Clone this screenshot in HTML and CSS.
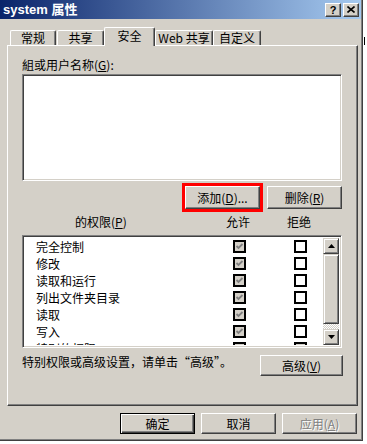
FILE: index.html
```html
<!DOCTYPE html>
<html lang="zh-CN">
<head>
  <meta charset="UTF-8">
  <title>system 属性</title>
  <link rel="stylesheet" href="styles.css">
</head>
<body>

<div class="screen">
<div class="dialog">

  <!-- barra del titolo -->
  <div class="titlebar">
    <span class="title">system 属性</span>
    <div class="caption-buttons">
      <span class="cap-btn">?</span>
      <span class="cap-btn">
        <svg width="8" height="7" viewBox="0 0 8 7"><path d="M0.5 0.5 L7.5 6.5 M7.5 0.5 L0.5 6.5" stroke="#000" stroke-width="1.6" fill="none"/></svg>
      </span>
    </div>
  </div>

  <div class="tabs">
    <div class="tab tab-general">常规</div>
    <div class="tab tab-share">共享</div>
    <div class="tab tab-security selected">安全</div>
    <div class="tab tab-web">Web 共享</div>
    <div class="tab tab-custom">自定义</div>
  </div>

  <div class="panel">
    <div class="label">組或用户名称(<u>G</u>):</div>
    <div class="field user-list"></div>

    <div class="button-row">
      <button class="btn btn-add">添加(<u>D</u>)...</button>
      <button class="btn">删除(<u>R</u>)</button>
    </div>

    <div class="perm-header">
      <span class="perm-title">的权限(<u>P</u>)</span>
      <span class="perm-col">允许</span>
      <span class="perm-col">拒绝</span>
    </div>

    <div class="field perm-list">
      <div class="perm-rows">
        <div class="perm-row"><span>完全控制</span><span class="check checked"></span><span class="check"></span></div>
        <div class="perm-row"><span>修改</span><span class="check checked"></span><span class="check"></span></div>
        <div class="perm-row"><span>读取和运行</span><span class="check checked"></span><span class="check"></span></div>
        <div class="perm-row"><span>列出文件夹目录</span><span class="check checked"></span><span class="check"></span></div>
        <div class="perm-row"><span>读取</span><span class="check checked"></span><span class="check"></span></div>
        <div class="perm-row"><span>写入</span><span class="check checked"></span><span class="check"></span></div>
        <div class="perm-row"><span>特别的权限</span><span class="check checked"></span><span class="check checked"></span></div>
      </div>
      <div class="scrollbar">
        <span class="sb-btn">
          <svg width="7" height="4" viewBox="0 0 7 4"><path d="M3.5 0 L7 4 L0 4 Z" fill="#000"/></svg>
        </span>
        <span class="sb-thumb"></span>
        <span class="sb-track"></span>
        <span class="sb-btn">
          <svg width="7" height="4" viewBox="0 0 7 4"><path d="M0 0 L7 0 L3.5 4 Z" fill="#000"/></svg>
        </span>
      </div>
    </div>

    <div class="advanced-row">
      <span class="note">特别权限或高级设置，请单击“高级”。</span>
      <button class="btn btn-advanced">高级(<u>V</u>)</button>
    </div>
  </div>

  <div class="footer">
    <button class="btn btn-default">确定</button>
    <button class="btn">取消</button>
    <button class="btn" disabled>应用(<u>A</u>)</button>
  </div>

</div>
<div class="edge"><span class="edge-mark"></span></div>
</div>

</body>
</html>
```

FILE: styles.css
```css
body {
  margin: 0;
  background: #fff;
  font-family: "Noto Sans CJK SC", "Liberation Sans", sans-serif;  /*font*/
  font-size: 12px;
  color: #000;
}
.screen {
  display: flex;
  width: 367px;
  height: 444px;
  overflow: hidden;
}
.dialog {
  width: 362px;
  height: 440px;
  background: #d4d0c8;            /*colore di Windows classico*/
  border-right: 1px solid #404040;
  border-bottom: 1px solid #404040;
  box-shadow: inset -1px -1px #808080;
  flex-shrink: 0;
}
.edge {
  flex: 1;
  padding-top: 37px;
  padding-left: 1px;
}
.edge-mark {
  display: block;
  width: 1px;
  height: 8px;
  background: #000;
}

/* barra del titolo */
.titlebar {
  height: 19px;
  margin-right: 1px;
  background: linear-gradient(to right, #0a246a, #a6caf0);
  display: flex;
  align-items: center;
  justify-content: space-between;
}
.title {
  font-family: "Liberation Sans", "Noto Sans CJK SC", sans-serif;
  font-weight: bold;
  font-size: 13px;
  color: #fff;
  padding-left: 3px;
  line-height: 15px;
}
.caption-buttons {
  display: flex;
  gap: 2px;
  padding-right: 2px;
}
.cap-btn {
  width: 14px;
  height: 12px;
  background: #d4d0c8;
  border: 1px solid;
  border-color: #fff #404040 #404040 #fff;
  box-shadow: inset -1px -1px #808080;
  display: flex;
  align-items: center;
  justify-content: center;
  font-family: "Liberation Sans", sans-serif;
  font-weight: bold;
  font-size: 11px;
  line-height: 12px;
}

/* schede */
.tabs {
  height: 26px;
  display: flex;
  align-items: flex-end;
  padding-left: 10px;
}
.tab {
  height: 14px;
  line-height: 14px;
  text-align: center;
  border-top: 1px solid #fff;
  border-left: 1px solid #fff;
  border-right: 1px solid #404040;
  box-shadow: inset -1px 0 #808080;
  border-radius: 2px 2px 0 0;
}
.tab-general { width: 44px; margin-right: 1px; }
.tab-share { width: 45px; }
.tab-security { width: 49px; }
.tab-web { width: 56px; }
.tab-custom { width: 46px; }
.tab.selected {
  height: 18px;
  line-height: 16px;
  margin-bottom: -1px;
  position: relative;
  z-index: 1;
  background: #d4d0c8;
}

/* pannello */
.panel {
  margin-left: 7px;
  width: 351px;
  height: 361px;
  border: 1px solid;
  border-color: #fff #404040 #404040 #fff;
  box-shadow: inset -1px -1px #808080;
  padding: 13px 0 0 14px;
  box-sizing: border-box;
}
.label {
  line-height: 12px;
  margin-bottom: 3px;
}
.field {
  background: #fff;
  border: 1px solid;
  border-color: #808080 #fff #fff #808080;
  box-shadow: inset 1px 1px #404040, inset -1px -1px #d4d0c8;
  box-sizing: border-box;
  width: 320px;
}
.user-list {
  height: 107px;
}
.button-row {
  width: 320px;
  display: flex;
  justify-content: flex-end;
  gap: 7px;
  margin-top: 5px;
}
.btn {
  font-family: inherit;
  font-size: 12px;
  color: #000;
  background: #d4d0c8;
  width: 75px;
  height: 23px;
  padding: 0;
  border: 1px solid;
  border-color: #fff #404040 #404040 #fff;
  box-shadow: inset -1px -1px #808080;
  border-radius: 0;
  line-height: 14px;
}
.btn-add {
  outline: 3px solid #f00;
}
.btn:disabled {
  color: #808080;
  text-shadow: 1px 1px #fff;
}
.btn-default {
  border-color: #000;
  box-shadow: inset 1px 1px #fff, inset -1px -1px #404040, inset -2px -2px #808080;
}

/* intestazione permessi */
.perm-header {
  display: flex;
  margin-top: 2px;
  height: 20px;
  align-items: center;
}
.perm-title {
  width: 151px;
  padding-left: 53px;
}
.perm-col {
  width: 24px;
}
.perm-col + .perm-col {
  margin-left: 37px;
}
.perm-list {
  margin-top: 4px;
  height: 113px;
  padding: 2px;
  display: flex;
}
.perm-rows {
  flex: 1;
  overflow: hidden;
}
.perm-row {
  height: 17px;
  display: grid;
  grid-template-columns: 197px 61px 13px;
  padding-left: 11px;
  align-items: center;
  line-height: 14px;
}
.check {
  width: 13px;
  height: 13px;
  box-sizing: border-box;
  border: 2px solid #000;
  background: #fff;
}
.check.checked {
  background: #d4d0c8 url("data:image/svg+xml,%3Csvg xmlns='http://www.w3.org/2000/svg' width='9' height='9'%3E%3Cpath d='M1.5 4 L3.5 6 L7.5 2' stroke='%23808080' stroke-width='1.8' fill='none'/%3E%3C/svg%3E") center no-repeat;
}

/* barra di scorrimento */
.scrollbar {
  width: 16px;
  display: flex;
  flex-direction: column;
}
.sb-btn, .sb-thumb {
  background: #d4d0c8;
  border: 1px solid;
  border-color: #d4d0c8 #404040 #404040 #d4d0c8;
  box-shadow: inset 1px 1px #fff, inset -1px -1px #808080;
  box-sizing: border-box;
}
.sb-btn {
  height: 16px;
  display: flex;
  align-items: center;
  justify-content: center;
}
.sb-thumb {
  height: 70px;
}
.sb-track {
  flex: 1;
  background: repeating-conic-gradient(#fff 0 25%, #d4d0c8 0 50%) 0 0 / 2px 2px;
}

/* riga avanzate */
.advanced-row {
  width: 321px;
  display: flex;
  justify-content: space-between;
  align-items: flex-start;
  margin-top: 7px;
}
.note {
  line-height: 13px;
}
.btn-advanced {
  width: 83px;
  height: 21px;
}

/* pulsanti in basso */
.footer {
  display: flex;
  justify-content: flex-end;
  gap: 6px;
  margin-top: 7px;
  width: 357px;
}
.footer .btn {
  width: 75px;
  height: 21px;
}
```
